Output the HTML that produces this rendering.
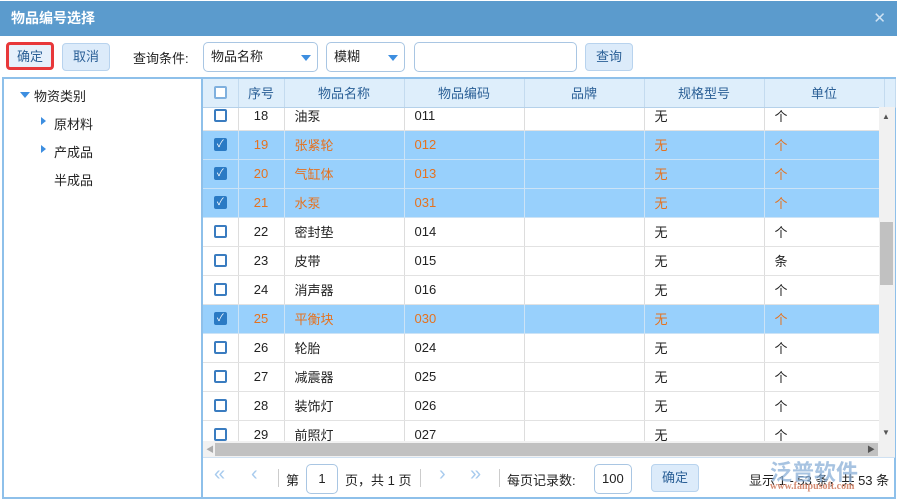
<!DOCTYPE html><html><head><meta charset="utf-8"><style>
*{box-sizing:border-box;margin:0;padding:0}
body{width:897px;height:502px;background:#fff;font-family:"Liberation Sans","Noto Sans CJK SC",sans-serif;font-size:13px;color:#222;position:relative;overflow:hidden}
.a{position:absolute}
.title{left:0;top:1px;width:897px;height:35px;background:#5b9bcd;color:#fff;font-weight:bold;font-size:14px;line-height:35px;padding-left:11px}
.btn{position:absolute;height:28px;border:1px solid #b8d3ee;background:#dcebfa;border-radius:4px;color:#2a5f96;text-align:center;line-height:26px}
.sel{position:absolute;height:30px;border:1px solid #a9c6e3;border-radius:5px;background:#fff;line-height:28px;padding-left:7px}
.tri{position:absolute;right:6px;top:12px;width:0;height:0;border-left:5px solid transparent;border-right:5px solid transparent;border-top:6px solid #3d8ee0}
table{border-collapse:collapse;table-layout:fixed}
td{height:29px;border-right:1px solid #ddd;border-bottom:1px solid #e2e2e2;padding-left:10px;white-space:nowrap}
.s td{background:#98d0fc;color:#e5721f;border-color:#cce3f6}
.cb{width:13px;height:13px;border:2px solid #3a7cc0;border-radius:2px;background:#fff;margin:0 auto}
.s .cb{background:#2a7ac4;border-color:#2a7ac4;color:#fff;font-size:10px;line-height:9px;text-align:center}
td.c{text-align:center;padding-left:0}
.h td{background:#deeefb;color:#2a5f96;text-align:center;padding-left:0;border-right:1px solid #c4dbef;border-bottom:1px solid #b5d1ea;height:28px}
.pg{position:absolute;top:463px;color:#a8cbee;font-size:20px}
</style></head><body>
<div class="a title">物品编号选择<span style="position:absolute;right:11px;top:0;font-weight:normal;font-size:15px;color:#cfe2f3">✕</span></div>
<div class="btn" style="left:6px;top:42px;width:48px;border:3px solid #e8383a;background:#e6f0fb;line-height:24px">确定</div>
<div class="btn" style="left:62px;top:43px;width:48px">取消</div>
<div class="a" style="left:133px;top:48px">查询条件:</div>
<div class="sel" style="left:203px;top:42px;width:115px">物品名称<div class="tri"></div></div>
<div class="sel" style="left:326px;top:42px;width:79px">模糊<div class="tri"></div></div>
<div class="sel" style="left:414px;top:42px;width:163px"></div>
<div class="btn" style="left:585px;top:43px;width:48px">查询</div>
<div class="a" style="left:2px;top:77px;width:894px;height:422px;border:2px solid #8ec0ea"></div>
<div class="a" style="left:201px;top:79px;width:2px;height:418px;background:#8ec0ea"></div>
<div class="a" style="left:20px;top:92px;width:0;height:0;border-left:5px solid transparent;border-right:5px solid transparent;border-top:6px solid #3d8ee0"></div>
<div class="a" style="left:34px;top:86px;font-size:13px">物资类别</div>
<div class="a" style="left:41px;top:117px;border-top:4px solid transparent;border-bottom:4px solid transparent;border-left:5px solid #3d8ee0"></div>
<div class="a" style="left:54px;top:114px">原材料</div>
<div class="a" style="left:41px;top:145px;border-top:4px solid transparent;border-bottom:4px solid transparent;border-left:5px solid #3d8ee0"></div>
<div class="a" style="left:54px;top:142px">产成品</div>
<div class="a" style="left:54px;top:170px">半成品</div>
<div class="a" style="left:203px;top:107px;width:676px;height:334px;overflow:hidden">
<table style="position:absolute;top:-6px;left:0;width:681px">
<colgroup><col style="width:35px"><col style="width:46px"><col style="width:120px"><col style="width:120px"><col style="width:120px"><col style="width:120px"><col style="width:120px"></colgroup>
<tr><td class="c"><div class="cb"></div></td><td class="c">18</td><td>油泵</td><td>011</td><td></td><td>无</td><td>个</td></tr>
<tr class="s"><td class="c"><div class="cb">✓</div></td><td class="c">19</td><td>张紧轮</td><td>012</td><td></td><td>无</td><td>个</td></tr>
<tr class="s"><td class="c"><div class="cb">✓</div></td><td class="c">20</td><td>气缸体</td><td>013</td><td></td><td>无</td><td>个</td></tr>
<tr class="s"><td class="c"><div class="cb">✓</div></td><td class="c">21</td><td>水泵</td><td>031</td><td></td><td>无</td><td>个</td></tr>
<tr><td class="c"><div class="cb"></div></td><td class="c">22</td><td>密封垫</td><td>014</td><td></td><td>无</td><td>个</td></tr>
<tr><td class="c"><div class="cb"></div></td><td class="c">23</td><td>皮带</td><td>015</td><td></td><td>无</td><td>条</td></tr>
<tr><td class="c"><div class="cb"></div></td><td class="c">24</td><td>消声器</td><td>016</td><td></td><td>无</td><td>个</td></tr>
<tr class="s"><td class="c"><div class="cb">✓</div></td><td class="c">25</td><td>平衡块</td><td>030</td><td></td><td>无</td><td>个</td></tr>
<tr><td class="c"><div class="cb"></div></td><td class="c">26</td><td>轮胎</td><td>024</td><td></td><td>无</td><td>个</td></tr>
<tr><td class="c"><div class="cb"></div></td><td class="c">27</td><td>减震器</td><td>025</td><td></td><td>无</td><td>个</td></tr>
<tr><td class="c"><div class="cb"></div></td><td class="c">28</td><td>装饰灯</td><td>026</td><td></td><td>无</td><td>个</td></tr>
<tr><td class="c"><div class="cb"></div></td><td class="c">29</td><td>前照灯</td><td>027</td><td></td><td>无</td><td>个</td></tr>
</table></div>
<table class="a" style="left:203px;top:79px;width:692px">
<colgroup><col style="width:35px"><col style="width:46px"><col style="width:120px"><col style="width:120px"><col style="width:120px"><col style="width:120px"><col style="width:120px"><col style="width:11px"></colgroup>
<tr class="h"><td><div class="cb" style="border-color:#7fb0de"></div></td><td>序号</td><td>物品名称</td><td>物品编码</td><td>品牌</td><td>规格型号</td><td>单位</td><td></td></tr></table>
<div class="a" style="left:879px;top:107px;width:16px;height:334px;background:#f1f1f1"></div>
<div class="a" style="left:880px;top:222px;width:13px;height:63px;background:#c1c1c1"></div>
<div class="a" style="left:882px;top:112px;font-size:8px;color:#555">▲</div>
<div class="a" style="left:882px;top:428px;font-size:8px;color:#555">▼</div>
<div class="a" style="left:203px;top:441px;width:692px;height:16px;background:#f1f1f1"></div>
<div class="a" style="left:215px;top:443px;width:663px;height:13px;background:#c1c1c1"></div>
<div class="a" style="left:206px;top:444px;font-size:8px;color:#aaa">◀</div>
<div class="a" style="left:867px;top:444px;font-size:8px;color:#555">▶</div>
<div class="a" style="left:203px;top:457px;width:692px;height:1px;background:#cfe1f2"></div>
<div class="pg" style="left:214px">«</div>
<div class="pg" style="left:251px">‹</div>
<div class="a" style="left:278px;top:469px;width:1px;height:18px;background:#ccc"></div>
<div class="a" style="left:286px;top:470px">第</div>
<div class="sel" style="left:306px;top:464px;width:32px;text-align:center;padding:0">1</div>
<div class="a" style="left:345px;top:470px">页，共 1 页</div>
<div class="a" style="left:420px;top:469px;width:1px;height:18px;background:#ccc"></div>
<div class="pg" style="left:439px">›</div>
<div class="pg" style="left:470px">»</div>
<div class="a" style="left:499px;top:469px;width:1px;height:18px;background:#ccc"></div>
<div class="a" style="left:507px;top:470px">每页记录数:</div>
<div class="sel" style="left:594px;top:464px;width:38px">100</div>
<div class="btn" style="left:651px;top:464px;width:48px">确定</div>
<div class="a" style="left:749px;top:470px">显示 1 - 53 条，共 53 条</div>
<div class="a" style="left:770px;top:455px;font-size:22px;color:#8ab0d8;opacity:.75;font-weight:bold">泛普软件</div>
<div class="a" style="left:770px;top:481px;font-size:10px;color:#d58b72;font-family:'Liberation Serif',serif;font-weight:bold">www.fanpusoft.com</div>
</body></html>
